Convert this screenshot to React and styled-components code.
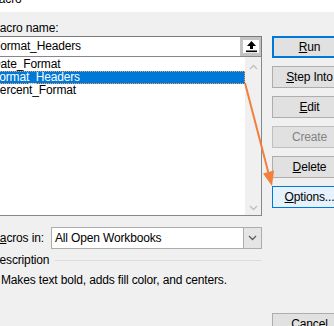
import React from 'react';
import styled, { createGlobalStyle } from 'styled-components';

const GlobalStyle = createGlobalStyle`
  html, body {
    margin: 0;
    padding: 0;
    background: #f0f0f0;
    overflow: hidden;
  }
  body {
    font-family: "Segoe UI", "Liberation Sans", Arial, sans-serif;
    font-size: 12px;
    letter-spacing: -0.15px;
    color: #000;
  }
`;

const Window = styled.div`
  position: relative;
  width: 334px;
  height: 326px;
  overflow: hidden;
  background: #f0f0f0;
`;

const TitleBar = styled.div`
  width: 345px;
  height: 12px;
  background: #fff;
  display: flex;
  align-items: flex-start;
  overflow: hidden;
  margin-left: -11px;
`;

const TitleText = styled.span`
  flex-shrink: 0;
  line-height: 14px;
  margin-top: ${p => p.$top ?? -8}px;
  margin-left: ${p => p.$gap || 0}px;
  font-size: ${p => p.$size || 12}px;
`;

const Body = styled.div`
  display: flex;
  gap: 10px;
  width: 358px;
  margin-left: -11px;
`;

const LeftColumn = styled.div`
  flex: 0 0 273px;
  display: flex;
  flex-direction: column;
`;

const FieldLabel = styled.div`
  line-height: 16px;
  margin-top: 8px;
  padding-left: 1px;
`;

const InputRow = styled.div`
  height: 20px;
  box-sizing: border-box;
  display: flex;
  border: 1px solid #7a7a7a;
  border-bottom: none;
  background: #fff;
`;

const InputText = styled.div`
  flex: 1;
  padding-left: 3px;
  line-height: 19px;
`;

const UploadButton = styled.div`
  width: 21px;
  height: 19px;
  box-sizing: border-box;
  border: 3px solid #c4c4c4;
  border-right-width: 2px;
  background: #fff;
  display: flex;
  align-items: center;
  justify-content: center;
`;

const ListBox = styled.div`
  height: 160px;
  box-sizing: border-box;
  border: 1px solid #828790;
  background: #fff;
  display: flex;
`;

const Items = styled.div`
  flex: 1;
  padding-top: 1px;
`;

const Item = styled.div`
  height: 13px;
  line-height: 13px;
  padding-left: 2px;
  box-sizing: border-box;
  background: ${p => (p.$selected ? '#0078d7' : 'transparent')};
  color: ${p => (p.$selected ? '#fff' : '#000')};
  outline: ${p => (p.$selected ? '1px dotted #f3a25a' : 'none')};
  outline-offset: -1px;
`;

const ScrollBar = styled.div`
  width: 16px;
  background: #f0f0f0;
  display: flex;
  flex-direction: column;
  justify-content: space-between;
  align-items: center;
  padding: 7px 0 4px;
`;

const SelectRow = styled.div`
  display: flex;
  align-items: center;
  margin-top: 11px;
`;

const SelectLabel = styled.div`
  flex: 0 0 62px;
  padding-left: 1px;
  box-sizing: border-box;
`;

const Select = styled.div`
  flex: 1;
  height: 22px;
  box-sizing: border-box;
  border: 1px solid #adadad;
  background: #fff;
  display: flex;
`;

const SelectValue = styled.div`
  flex: 1;
  padding-left: 3px;
  line-height: 20px;
`;

const SelectButton = styled.div`
  width: 17px;
  background: #e5e5e5;
  border-left: 1px solid #adadad;
  display: flex;
  align-items: center;
  justify-content: center;
`;

const GroupHeader = styled.div`
  display: flex;
  align-items: center;
  margin-top: 4px;
  line-height: 14px;
  padding-left: 2px;
`;

const GroupRule = styled.div`
  flex: 1;
  height: 1px;
  margin-left: 6px;
  background: #dcdcdc;
`;

const Description = styled.div`
  margin-top: 6px;
  line-height: 14px;
  padding-left: 12px;
`;

const ButtonColumn = styled.div`
  flex: 0 0 75px;
  padding-top: 24px;
  display: flex;
  flex-direction: column;
  gap: 8px;
`;

const DialogButton = styled.div`
  height: 22px;
  box-sizing: border-box;
  display: flex;
  align-items: center;
  justify-content: center;
  background: ${p => (p.$variant === 'focus' ? '#e5f1fb' : '#e1e1e1')};
  border: ${p =>
    p.$variant === 'default'
      ? '2px solid #0078d7'
      : p.$variant === 'focus'
      ? '1px solid #0078d7'
      : p.$variant === 'disabled'
      ? '1px solid #bfbfbf'
      : '1px solid #adadad'};
  color: ${p => (p.$variant === 'disabled' ? '#838383' : '#000')};
  margin-top: ${p => p.$offset || 0}px;
`;

const ArrowOverlay = styled.svg`
  position: absolute;
  left: 0;
  top: 0;
  pointer-events: none;
`;

const UpArrowIcon = () => (
  <svg width="11" height="13" viewBox="0 0 11 13">
    <polygon points="5.5,1 1,6 4,6 4,9 7,9 7,6 10,6" fill="#000" />
    <rect x="0" y="10.5" width="11" height="1.6" fill="#000" />
  </svg>
);

const Chevron = ({ up, color = '#a0a0a0' }) => (
  <svg width="9" height="6" viewBox="0 0 9 6">
    <polyline
      points={up ? '1,5 4.5,1.5 8,5' : '1,1 4.5,4.5 8,1'}
      fill="none"
      stroke={color}
      strokeWidth="1.4"
    />
  </svg>
);

const macros = ['Date_Format', 'Format_Headers', 'Percent_Format'];

export default function App() {
  return (
    <Window>
      <GlobalStyle />
      <TitleBar>
        <TitleText>Macro</TitleText>
        <TitleText $gap={258} $top={-11}>?</TitleText>
        <TitleText $gap={33} $top={-11} $size={13}>✕</TitleText>
      </TitleBar>
      <Body>
        <LeftColumn>
          <FieldLabel>Macro name:</FieldLabel>
          <InputRow>
            <InputText>Format_Headers</InputText>
            <UploadButton>
              <UpArrowIcon />
            </UploadButton>
          </InputRow>
          <ListBox>
            <Items>
              {macros.map(name => (
                <Item key={name} $selected={name === 'Format_Headers'}>
                  {name}
                </Item>
              ))}
            </Items>
            <ScrollBar>
              <Chevron up color="#c0c0c0" />
              <Chevron color="#c0c0c0" />
            </ScrollBar>
          </ListBox>
          <SelectRow>
            <SelectLabel>
              M<u>a</u>cros in:
            </SelectLabel>
            <Select>
              <SelectValue>All Open Workbooks</SelectValue>
              <SelectButton>
                <Chevron color="#606060" />
              </SelectButton>
            </Select>
          </SelectRow>
          <GroupHeader>
            Description
            <GroupRule />
          </GroupHeader>
          <Description>Makes text bold, adds fill color, and centers.</Description>
        </LeftColumn>
        <ButtonColumn>
          <DialogButton $variant="default">
            <u>R</u>un
          </DialogButton>
          <DialogButton>
            <u>S</u>tep Into
          </DialogButton>
          <DialogButton>
            <u>E</u>dit
          </DialogButton>
          <DialogButton $variant="disabled">Create</DialogButton>
          <DialogButton>
            <u>D</u>elete
          </DialogButton>
          <DialogButton $variant="focus">
            <u>O</u>ptions...
          </DialogButton>
          <DialogButton $offset={97}>Cancel</DialogButton>
        </ButtonColumn>
      </Body>
      <ArrowOverlay width="334" height="326">
        <line x1="245" y1="83" x2="269" y2="175" stroke="#f47e3c" strokeWidth="2" />
        <polygon points="272,186 263,173.5 274,170.5" fill="#f47e3c" />
      </ArrowOverlay>
    </Window>
  );
}
